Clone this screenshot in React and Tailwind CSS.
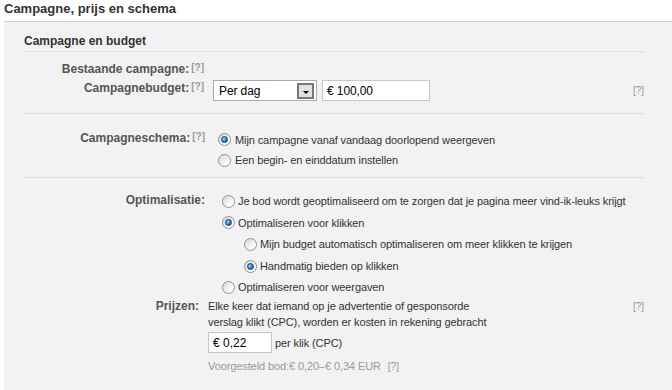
import React from "react";

const Help = ({ className = "" }) => (
    <span className={`text-[10px] text-[#999] tracking-normal ${className}`}>[?]</span>
);

const Radio = ({ checked }) => (
    <span className="inline-flex w-[13px] h-[13px] shrink-0 items-center justify-center rounded-full border border-[#8f9190] bg-[linear-gradient(135deg,#d4d4ce,#ffffff_75%)]">
        {checked && (
            <span className="w-[7px] h-[7px] rounded-full border border-[#0c3f7d] bg-[radial-gradient(circle_at_35%_35%,#9fe0ff,#1f7fd0_55%,#0b4a92)]" />
        )}
    </span>
);

const Option = ({ checked, children, indent }) => (
    <div className={`flex items-center gap-[3px] ${indent ? "pl-[22px]" : ""}`}>
        <Radio checked={checked} />
        <span>{children}</span>
    </div>
);

const App = () => {
    return (
        <div className="w-[672px] h-[390px] overflow-hidden bg-white text-[11px] leading-[14px] tracking-[-0.1px] text-[#333] font-['Liberation_Sans',Arial,sans-serif]">
            <h2 className="h-[21px] pl-[4px] pt-[1px] text-[13px] leading-[16px] tracking-normal font-bold text-[#333]">
                Campagne, prijs en schema
            </h2>

            <div className="ml-[4px] h-[369px] border-t border-[#cccccc] bg-[#f2f2f2] pl-[20px] pr-[28px]">
                {/* Campagne en budget */}
                <div className="h-[30px] border-b border-[#dddddd] pt-[12px] text-[12px] leading-[14px] tracking-normal font-bold text-[#333]">
                    Campagne en budget
                </div>

                <div className="border-b border-[#dddddd] pt-[10px] pb-[12px]">
                    <div className="flex h-[18px]">
                        <div className="w-[180px] text-right font-bold text-[12px] tracking-normal text-[#555]">
                            Bestaande campagne:<Help className="ml-[2px] relative -top-[2px]" />
                        </div>
                    </div>
                    <div className="flex h-[21px] items-start">
                        <div className="w-[180px] pt-[1px] text-right font-bold text-[12px] tracking-normal text-[#555]">
                            Campagnebudget:<Help className="ml-[2px] relative -top-[2px]" />
                        </div>
                        <div className="ml-[9px] flex gap-[5px]">
                            <div className="flex h-[21px] w-[104px] items-center justify-between border border-[#a5acb5] bg-white pl-[5px] pr-[2px] text-[12px] text-black">
                                <span>Per dag</span>
                                <span className="flex h-[16px] w-[17px] items-center justify-center border-2 border-[#777] bg-[#e2e2e2]">
                                    <span className="mt-[3px] h-0 w-0 border-x-[3px] border-t-[3px] border-x-transparent border-t-black" />
                                </span>
                            </div>
                            <div className="flex h-[21px] w-[108px] items-center border border-[#bdc7d8] bg-white pl-[4px] text-[12px] text-black">
                                € 100,00
                            </div>
                        </div>
                        <div className="ml-auto pt-[3px]">
                            <Help />
                        </div>
                    </div>
                </div>

                {/* Campagneschema */}
                <div className="flex border-b border-[#dddddd] pt-[15px] pb-[7px]">
                    <div className="w-[181px] pt-[2px] text-right font-bold text-[12px] tracking-normal text-[#555]">
                        Campagneschema:<Help className="ml-[2px] relative -top-[2px]" />
                    </div>
                    <div className="ml-[13px] flex flex-col">
                        <div className="flex h-[21px] items-center gap-[4px]">
                            <Radio checked />
                            <span>Mijn campagne vanaf vandaag doorlopend weergeven</span>
                        </div>
                        <div className="flex h-[20px] items-center gap-[4px]">
                            <Radio />
                            <span>Een begin- en einddatum instellen</span>
                        </div>
                    </div>
                </div>

                {/* Optimalisatie */}
                <div className="flex pt-[12px]">
                    <div className="w-[181px] pt-[3px] text-right font-bold text-[12px] tracking-normal text-[#555]">
                        Optimalisatie:
                    </div>
                    <div className="ml-[17px] flex flex-col">
                        <div className="flex h-[22px] items-center"><Option>Je bod wordt geoptimaliseerd om te zorgen dat je pagina meer vind-ik-leuks krijgt</Option></div>
                        <div className="flex h-[21px] items-center"><Option checked>Optimaliseren voor klikken</Option></div>
                        <div className="flex h-[22px] items-center"><Option indent>Mijn budget automatisch optimaliseren om meer klikken te krijgen</Option></div>
                        <div className="flex h-[22px] items-center"><Option indent checked>Handmatig bieden op klikken</Option></div>
                        <div className="flex h-[20px] items-center"><Option>Optimaliseren voor weergaven</Option></div>
                    </div>
                </div>

                {/* Prijzen */}
                <div className="flex pt-[1px]">
                    <div className="w-[175px] text-right font-bold text-[12px] leading-[16px] tracking-normal text-[#555]">Prijzen:</div>
                    <div className="ml-[9px] flex flex-col">
                        <div className="leading-[16px]">
                            Elke keer dat iemand op je advertentie of gesponsorde
                            <br />
                            verslag klikt (CPC), worden er kosten in rekening gebracht
                        </div>
                        <div className="mt-[2px] flex items-center gap-[3px]">
                            <div className="flex h-[21px] w-[64px] items-center border border-[#bdc7d8] bg-white pl-[4px] text-[12px] tracking-normal text-black">
                                € 0,22
                            </div>
                            <span>per klik (CPC)</span>
                        </div>
                        <div className="mt-[6px] text-[#999]">
                            Voorgesteld bod:€ 0,20–€ 0,34 EUR <Help className="ml-[4px]" />
                        </div>
                    </div>
                    <div className="ml-auto pt-[1px]">
                        <Help />
                    </div>
                </div>
            </div>
        </div>
    );
};

export default App;
